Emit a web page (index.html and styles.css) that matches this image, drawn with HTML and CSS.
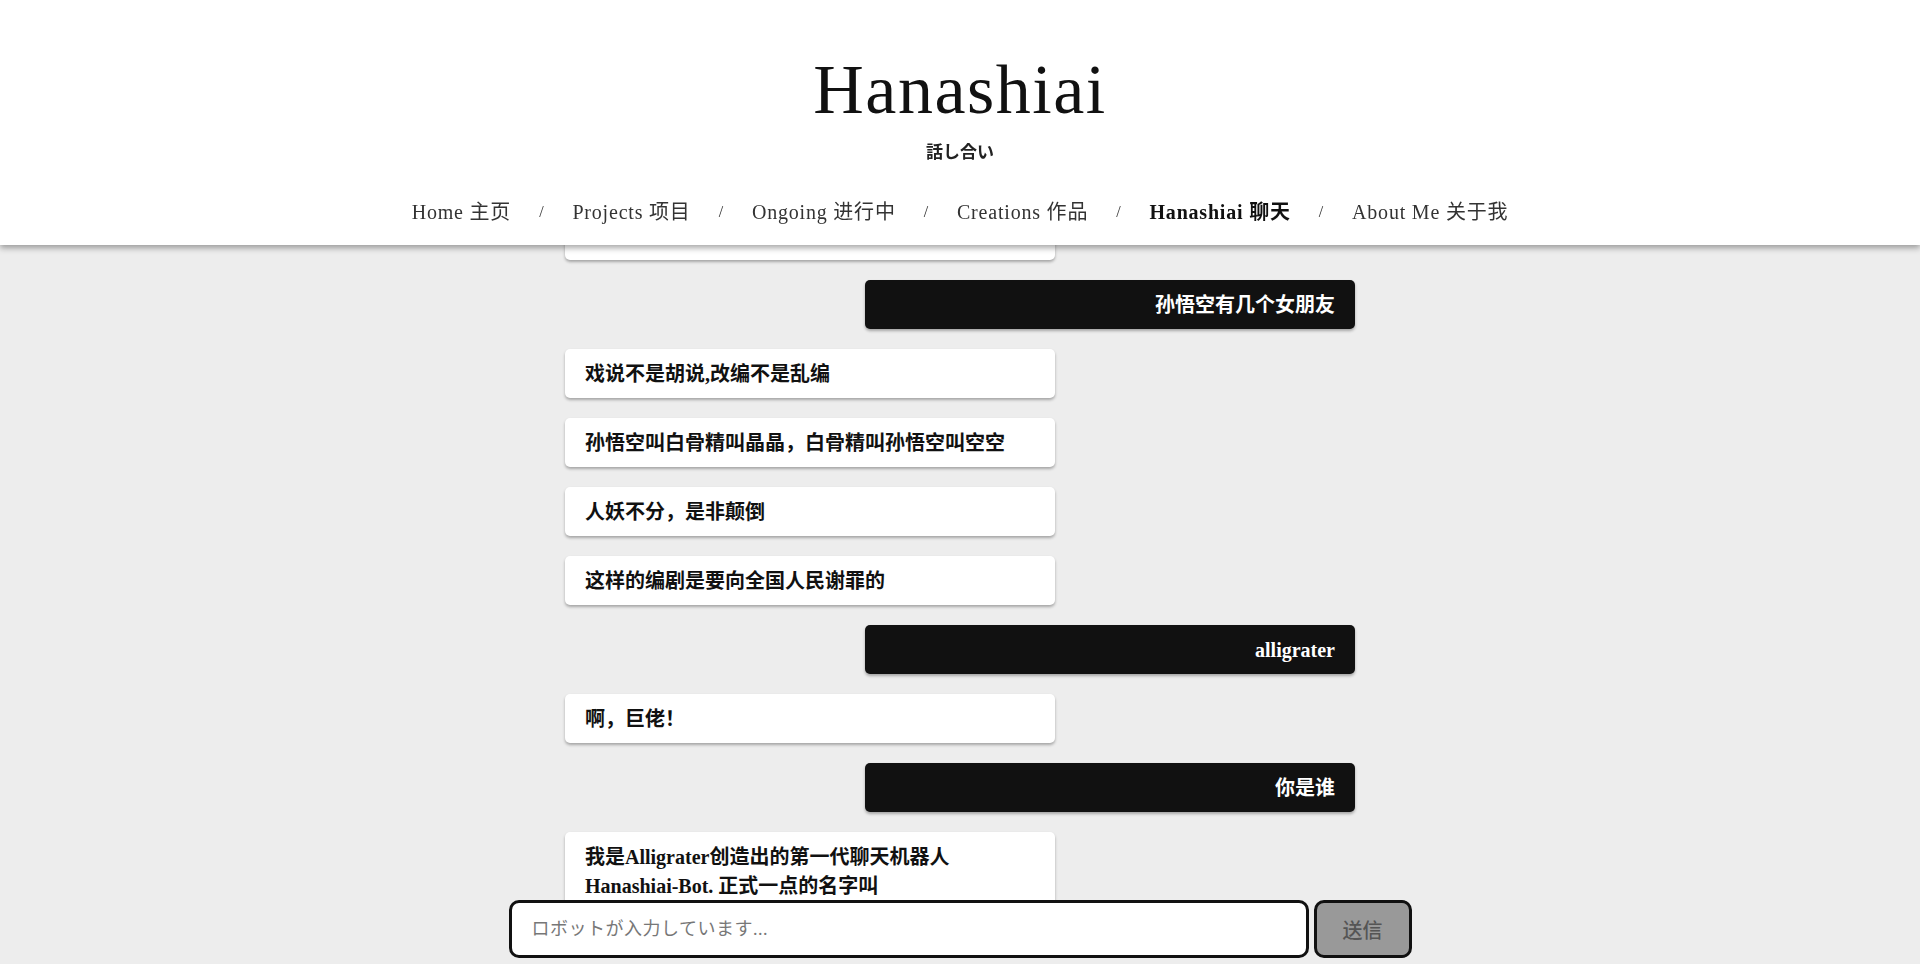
FILE: index.html
```html
<!DOCTYPE html>
<html lang="zh">
<head>
<meta charset="utf-8">
<title>Hanashiai 聊天</title>
<link rel="stylesheet" href="styles.css">
</head>
<body>
<header class="site-header">
  <h1 class="site-title">Hanashiai</h1>
  <p class="site-subtitle" lang="ja">話し合い</p>
  <nav class="site-nav">
    <a class="nav-link" href="#">Home 主页</a>
    <span class="nav-sep">/</span>
    <a class="nav-link" href="#">Projects 项目</a>
    <span class="nav-sep">/</span>
    <a class="nav-link" href="#">Ongoing 进行中</a>
    <span class="nav-sep">/</span>
    <a class="nav-link" href="#">Creations 作品</a>
    <span class="nav-sep">/</span>
    <a class="nav-link active" href="#">Hanashiai 聊天</a>
    <span class="nav-sep">/</span>
    <a class="nav-link" href="#">About Me 关于我</a>
  </nav>
</header>

<main class="chat">
  <div class="msg bot">欢迎来到Hanashiai</div>
  <div class="msg user">孙悟空有几个女朋友</div>
  <div class="msg bot">戏说不是胡说,改编不是乱编</div>
  <div class="msg bot">孙悟空叫白骨精叫晶晶，白骨精叫孙悟空叫空空</div>
  <div class="msg bot">人妖不分，是非颠倒</div>
  <div class="msg bot">这样的编剧是要向全国人民谢罪的</div>
  <div class="msg user">alligrater</div>
  <div class="msg bot">啊，巨佬！</div>
  <div class="msg user">你是谁</div>
  <div class="msg bot">我是Alligrater创造出的第一代聊天机器人 Hanashiai-Bot. 正式一点的名字叫<br>話し合い。很高兴认识你，有什么想聊的吗？</div>
</main>

<form class="composer" onsubmit="return false;">
  <input class="composer-input" type="text" placeholder="ロボットが入力しています..." autofocus>
  <button class="composer-send" type="submit">送信</button>
</form>
</body>
</html>
```

FILE: styles.css
```css
html, body {
  height: 100%;
  overflow: hidden;
}

body {
  margin: 0;
  background: #ededed;
  color: #111;
  font-family: "Liberation Serif", "Noto Sans CJK SC", serif;
}

.site-header {
  position: fixed;
  top: 0;
  left: 0;
  right: 0;
  height: 245px;
  box-sizing: border-box;
  padding-top: 50px;
  background: #fff;
  text-align: center;
  box-shadow: 0 3px 6px rgba(0, 0, 0, 0.35);
  z-index: 10;
}

.site-title {
  margin: 0;
  font-size: 70px;
  line-height: 80px;
  font-weight: 400;
  letter-spacing: 1.5px;
  color: #111;
}

.site-subtitle {
  margin: 9px 0 0;
  font-family: "Noto Sans CJK JP", sans-serif;
  font-size: 17px;
  line-height: 24px;
  font-weight: 700;
  color: #222;
}

.site-nav {
  margin-top: 34px;
  display: flex;
  justify-content: center;
  align-items: center;
  gap: 28px;
  font-size: 20px;
  line-height: 30px;
  letter-spacing: 0.8px;
}

.nav-link {
  color: #333;
  text-decoration: none;
}

.nav-link.active {
  color: #111;
  font-weight: 700;
}

.nav-sep {
  font-size: 16px;
  color: #333;
}

.chat {
  width: 790px;
  margin: 0 auto;
  padding: 211px 0 120px;
  display: flex;
  flex-direction: column;
  gap: 20px;
}

.msg {
  width: 490px;
  box-sizing: border-box;
  padding: 11px 20px 9px;
  border-radius: 5px;
  font-size: 20px;
  line-height: 29px;
  font-weight: 700;
  box-shadow: 0 2px 3px rgba(0, 0, 0, 0.3);
}

.msg.bot {
  align-self: flex-start;
  background: #fff;
  color: #111;
}

.msg.user {
  align-self: flex-end;
  background: #111;
  color: #fff;
  text-align: right;
}

.composer {
  position: fixed;
  left: 0;
  right: 0;
  bottom: 6px;
  margin: 0;
  display: flex;
  justify-content: center;
  gap: 5px;
  z-index: 5;
}

.composer-input {
  width: 800px;
  height: 58px;
  box-sizing: border-box;
  padding: 0 20px;
  border: 3px solid #111;
  border-radius: 10px;
  background: #fff;
  font-family: "Liberation Serif", "Noto Sans CJK JP", serif;
  font-size: 18px;
  letter-spacing: 0.5px;
  color: #111;
  outline: none;
}

.composer-input::placeholder {
  color: #777;
}

.composer-send {
  width: 98px;
  height: 58px;
  box-sizing: border-box;
  border: 3px solid #111;
  border-radius: 10px;
  background: #999;
  color: #555;
  font-family: "Noto Sans CJK SC", sans-serif;
  font-size: 20px;
  font-weight: 500;
  cursor: pointer;
}
```
